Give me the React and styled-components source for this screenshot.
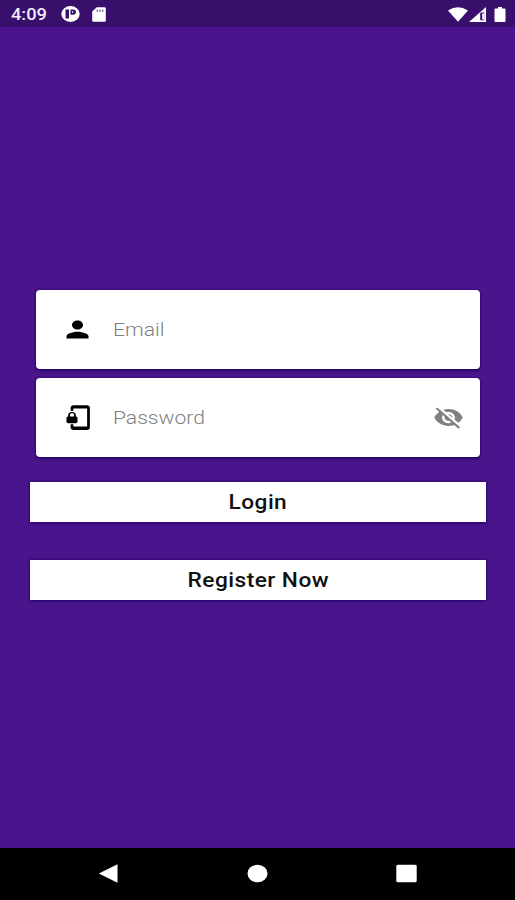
import React, { Component } from "react";
import styled, { createGlobalStyle } from "styled-components";
import { MdPerson, MdPhonelinkLock, MdVisibilityOff } from "react-icons/md";

const GlobalStyle = createGlobalStyle`
  * {
    box-sizing: border-box;
  }
  body {
    margin: 0;
    background-color: #4a148c;
  }
`;

const Screen = styled.div`
  display: flex;
  flex-direction: column;
  height: 900px;
  background-color: #4a148c;
  font-family: Roboto, "Liberation Sans", sans-serif;
`;

const StatusBar = styled.div`
  display: flex;
  align-items: center;
  flex: none;
  height: 27px;
  padding: 1px 9px 0 11px;
  background-color: #380f6a;
  color: #fff;
`;

const Time = styled.span`
  width: 35px;
  padding-top: 1px;
  font-size: 16px;
  font-weight: 500;
  line-height: 16px;
  color: #f2edf8;
  white-space: nowrap;
  transform: scaleX(1.14);
  transform-origin: left;
`;

const StatusIcon = styled.svg`
  flex: none;
  display: block;
  width: ${(props) => props.$w}px;
  height: ${(props) => props.$h}px;
  margin-left: ${(props) => props.$gap}px;
  fill: #fff;
`;

const Spacer = styled.div`
  flex: 1;
`;

const Form = styled.form`
  display: flex;
  flex-direction: column;
  flex: 1;
  padding: 263px 29px 0 30px;
`;

const Field = styled.label`
  display: flex;
  align-items: center;
  height: 79px;
  margin: 0 6px 9px 6px;
  padding: 0 16px 0 25px;
  border-radius: 4px;
  background-color: #fff;
  box-shadow: 0 2px 3px rgba(20, 0, 90, 0.65), 0 0 2px #1e0070;
  cursor: text;
  svg {
    flex: none;
    height: 27px;
  }
`;

const FieldIcon = styled.span`
  display: flex;
  color: #000;
  svg {
    width: 33px;
  }
`;

const EyeIcon = styled.span`
  display: flex;
  color: #808080;
  svg {
    width: 31px;
  }
`;

const Input = styled.input`
  flex: 1;
  min-width: 0;
  margin-left: 19px;
  padding: 0;
  border: 0;
  outline: none;
  background-color: transparent;
  font-family: inherit;
  font-size: 18.5px;
  font-weight: 300;
  color: #000;
  transform: scaleX(1.14);
  transform-origin: left;
  &::placeholder {
    color: #808080;
    opacity: 1;
  }
`;

const Button = styled.button`
  height: 40px;
  margin: ${(props) => props.$top}px 0 0;
  padding: 0;
  border: 0;
  border-radius: 0;
  background-color: #fff;
  box-shadow: 0 1px 3px rgba(20, 0, 90, 0.6), 0 0 2px #1e0070;
  font-family: inherit;
  font-size: 20px;
  font-weight: 500;
  color: #111;
`;

const Caption = styled.span`
  display: inline-block;
  letter-spacing: 0.4px;
  transform: scaleX(1.135);
`;

const NavBar = styled.div`
  display: flex;
  align-items: center;
  justify-content: space-between;
  flex: none;
  height: 52px;
  padding: 0 98px 1px;
  background-color: #000;
`;

const NavIcon = styled.svg`
  display: block;
  width: 21px;
  height: 19px;
  fill: #fff;
`;

class App extends Component {
  state = {
    email: "",
    password: "",
    hidden: true,
  };
  render() {
    const { email, password, hidden } = this.state;
    return (
      <Screen>
        <GlobalStyle />
        <StatusBar>
          <Time>4:09</Time>
          <StatusIcon $w={19} $h={16} $gap={15} viewBox="0 0 19 16">
            <ellipse cx="9.5" cy="8" rx="9.2" ry="7.9" />
            <path d="M4.5 3.5H8v9H4.500z" fill="#380f6a" />
            <path
              d="M9.500 3.500h2.500a3 2.600 0 0 1 0 5.200h-2.500z"
              fill="#380f6a"
            />
            <path d="M11.200 5.200h1v1.800h-1z" />
          </StatusIcon>
          <StatusIcon $w={14} $h={15} $gap={12} viewBox="0 0 14 15">
            <path d="M4.8.3h7.7q1.3 0 1.3 1.3v11.8q0 1.3-1.3 1.3h-11q-1.300 0-1.300-1.300V4.500z" />
            <path
              d="M4.600 2.500h1.400v2.500h-1.400zM7.300 2.500h1.400v2.500h-1.400zM10 2.500h1.400v2.500h-1.400z"
              fill="#8d74ad"
            />
          </StatusIcon>
          <Spacer />
          <StatusIcon $w={20} $h={15} $gap={0} viewBox="0 0 20 15">
            <path d="M10 14.800L0 3.600Q10-3 20 3.600z" />
          </StatusIcon>
          <StatusIcon $w={17} $h={15} $gap={1} viewBox="0 0 17 15">
            <path d="M17 0v15H0z" />
            <path d="M11.200 13.200V6.500q0-1 1-1h3v7.700z" fill="#380f6a" />
            <path d="M13.200 6.500h1.800v6h-1.800z" />
          </StatusIcon>
          <StatusIcon $w={12} $h={15} $gap={8} viewBox="0 0 12 15">
            <path d="M4 0h4v1.500h2.500q1 0 1 1V14q0 1-1 1h-9q-1 0-1-1V2.500q0-1 1-1H4z" />
          </StatusIcon>
        </StatusBar>
        <Form onSubmit={(e) => e.preventDefault()}>
          <Field>
            <FieldIcon>
              <MdPerson preserveAspectRatio="none" />
            </FieldIcon>
            <Input
              placeholder="Email"
              value={email}
              onChange={(e) => {
                this.setState({
                  email: e.target.value,
                });
              }}
              type="text"
            />
          </Field>
          <Field>
            <FieldIcon>
              <MdPhonelinkLock preserveAspectRatio="none" />
            </FieldIcon>
            <Input
              placeholder="Password"
              value={password}
              onChange={(e) => {
                this.setState({
                  password: e.target.value,
                });
              }}
              type={hidden ? "password" : "text"}
            />
            <EyeIcon onClick={() => this.setState({ hidden: !hidden })}>
              <MdVisibilityOff preserveAspectRatio="none" />
            </EyeIcon>
          </Field>
          <Button type="submit" $top={16}>
            <Caption>Login</Caption>
          </Button>
          <Button type="button" $top={38}>
            <Caption>Register Now</Caption>
          </Button>
        </Form>
        <NavBar>
          <NavIcon viewBox="0 0 21 19">
            <path d="M.800 9.500L19.500.200v18.600z" />
          </NavIcon>
          <NavIcon viewBox="0 0 21 19">
            <ellipse cx="10.500" cy="9.500" rx="10" ry="8.700" />
          </NavIcon>
          <NavIcon viewBox="0 0 21 19">
            <rect x="0.300" y="0.700" width="20.400" height="17.600" rx="1.500" />
          </NavIcon>
        </NavBar>
      </Screen>
    );
  }
}

export default App;
